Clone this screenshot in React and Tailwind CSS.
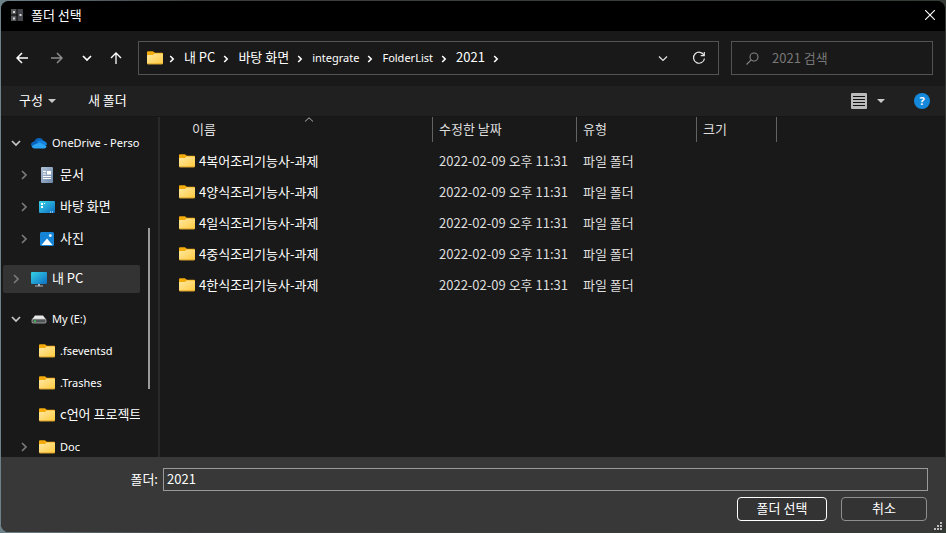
import React from "react";

const KO = "font-['Noto_Sans_CJK_KR',sans-serif] text-[13px] leading-4";
const EN = "font-['Noto_Sans','Noto_Sans_CJK_KR',sans-serif] text-[11px] leading-4";

function FolderIcon() {
  return (
    <svg className="h-4 w-4 shrink-0" viewBox="0 0 16 16" aria-hidden="true">
      <defs>
        <linearGradient id="folder" x1="0" y1="0" x2="1" y2="1">
          <stop offset="0" stopColor="#ffe9a3" />
          <stop offset="1" stopColor="#ffca3f" />
        </linearGradient>
      </defs>
      <path d="M0 2.2Q0 1.2 1 1.2H5.6Q6.2 1.2 6.7 1.7L7.8 2.8H15Q16 2.8 16 3.8V8H0Z" fill="#f4ab0c" />
      <path d="M0 5.6Q0 4.9.8 4.9H6L7.6 3.5H15.2Q16 3.5 16 4.3V13.2Q16 14.2 15 14.2H1Q0 14.2 0 13.2Z" fill="url(#folder)" />
      <path d="M0 13Q0 14.2 1 14.2H15Q16 14.2 16 13L15.5 13.4H.5Z" fill="#dc9c1c" />
    </svg>
  );
}

function CloudIcon() {
  return (
    <svg className="h-4 w-4 shrink-0" viewBox="0 0 16 16" aria-hidden="true">
      <path d="M3.6 6.2A4.8 4.8 0 0 1 12.6 6L8 10.5 1 12Q-.4 10 .3 8.300Q1.300 6.500 3.600 6.200Z" fill="#0a64bd" />
      <path d="M6 6.600Q9 4.600 12.700 6.100Q15.800 6.800 16 9.500L14 11H9Z" fill="#1583dc" />
      <path d="M.8 11.800Q1 10.500 3 9.700L8.500 7.600L15.700 11.200Q15 13.500 13 13.500H3.500Q1.500 13.500.8 11.800Z" fill="#2ba5f3" />
    </svg>
  );
}

function DocumentIcon() {
  return (
    <svg className="h-4 w-4 shrink-0" viewBox="0 0 16 16" aria-hidden="true">
      <defs>
        <linearGradient id="doc" x1="0" y1="0" x2="1" y2="1">
          <stop offset="0" stopColor="#b3c3d8" />
          <stop offset="1" stopColor="#6c87a8" />
        </linearGradient>
      </defs>
      <rect x="2" y="0" width="12" height="16" rx="1" fill="url(#doc)" />
      <path d="M4 4.500H7M4 7H7M4 9.500H12M4 11.500H12" stroke="#fff" />
      <rect x="8" y="4" width="4" height="3.600" fill="#fff" />
    </svg>
  );
}

function DesktopIcon() {
  return (
    <svg className="h-4 w-4 shrink-0" viewBox="0 0 16 16" aria-hidden="true">
      <defs>
        <linearGradient id="screen" x1="0" y1="0" x2="1" y2="1">
          <stop offset="0" stopColor="#3bd4e8" />
          <stop offset="1" stopColor="#0b6fc4" />
        </linearGradient>
      </defs>
      <rect x="0" y="2" width="16" height="12" rx="1" fill="url(#screen)" />
      <path d="M2 4H4V6H2ZM2 7H4V9H2ZM5 4H6V5H5ZM11 12.500H12V13.500H11ZM13 12.500H14V13.500H13Z" fill="#fff" />
    </svg>
  );
}

function PictureIcon() {
  return (
    <svg className="h-4 w-4 shrink-0" viewBox="0 0 16 16" aria-hidden="true">
      <rect x="1" y="1" width="14" height="14" rx="1.500" fill="#1583d6" />
      <path d="M2.500 14L8 7.500L13.500 14Z" fill="#fff" />
      <circle cx="11.300" cy="4.500" r="1.500" fill="#d9f0ff" />
    </svg>
  );
}

function ComputerIcon() {
  return (
    <svg className="h-4 w-4 shrink-0" viewBox="0 0 16 16" aria-hidden="true">
      <defs>
        <linearGradient id="monitor" x1="0" y1="0" x2="1" y2="1">
          <stop offset="0" stopColor="#36d2e6" />
          <stop offset="1" stopColor="#0c6ec2" />
        </linearGradient>
      </defs>
      <rect x="0" y="1" width="16" height="12" rx="1" fill="url(#monitor)" />
      <path d="M7 13H9V14.500H12V15.500H4V14.500H7Z" fill="#a9b5bf" />
    </svg>
  );
}

function DriveIcon() {
  return (
    <svg className="h-4 w-4 shrink-0" viewBox="0 0 16 16" aria-hidden="true">
      <path d="M4 4.500H12L15 8.500H1Z" fill="#e8e8e8" />
      <rect x="1" y="8" width="14" height="4" rx="1" fill="#4f5456" stroke="#c4c4c4" strokeWidth=".7" />
      <rect x="3" y="9.500" width="2" height="1.200" fill="#35e04c" />
    </svg>
  );
}

function Chevron({ open, className }) {
  return (
    <svg className={className} width="10" height="10" viewBox="0 0 10 10" fill="none" stroke="currentColor" strokeWidth="1.700" aria-hidden="true">
      <path d={open ? "M1 3L5 7L9 3" : "M3 1L7 5L3 9"} />
    </svg>
  );
}

function Triangle() {
  return (
    <svg width="8" height="4" viewBox="0 0 8 4" fill="#c8c8c8" aria-hidden="true">
      <path d="M0 0H8L4 4Z" />
    </svg>
  );
}

const tree = [
  { label: "OneDrive - Personal", icon: CloudIcon, state: "open" },
  { label: "문서", icon: DocumentIcon, state: "closed", child: true, ko: true },
  { label: "바탕 화면", icon: DesktopIcon, state: "closed", child: true, ko: true },
  { label: "사진", icon: PictureIcon, state: "closed", child: true, ko: true },
  { label: "내 PC", icon: ComputerIcon, state: "closed", selected: true, ko: true },
  { label: "My (E:)", icon: DriveIcon, state: "open" },
  { label: ".fseventsd", icon: FolderIcon, child: true },
  { label: ".Trashes", icon: FolderIcon, child: true },
  { label: "c언어 프로젝트", icon: FolderIcon, child: true, ko: true },
  { label: "Doc", icon: FolderIcon, state: "closed", child: true },
];

function TreeRow({ item }) {
  const Icon = item.icon;
  return (
    <li className={item.selected ? "py-2.5" : ""}>
      <button
        type="button"
        className={`flex w-full items-center text-left whitespace-nowrap text-white ${item.child ? "pl-4" : "pl-2"} ${item.selected ? "h-7 rounded-xs bg-[#333333]" : "h-8"}`}
      >
        <span className="flex w-5 shrink-0">
          {item.state && <Chevron open={item.state === "open"} className={item.state === "open" ? "text-[#c8c8c8]" : "text-[#7a7a7a]"} />}
        </span>
        <Icon />
        <span className={`pl-[5px] ${item.ko ? `pb-0.5 ${KO}` : EN}`}>{item.label}</span>
      </button>
    </li>
  );
}

const crumbs = [
  { label: "내 PC", ko: true },
  { label: "바탕 화면", ko: true },
  { label: "integrate" },
  { label: "FolderList" },
  { label: "2021", ko: true },
];

function CrumbArrow() {
  return (
    <svg className="mt-0.5 shrink-0" width="6" height="8" viewBox="0 0 6 8" fill="none" stroke="#fff" strokeWidth="1.600" aria-hidden="true">
      <path d="M1.200 1L4.200 4L1.200 7" />
    </svg>
  );
}

function AddressBar() {
  return (
    <div className="flex h-[34px] min-w-0 flex-1 items-center border border-[#535353] pr-3 pl-2">
      <FolderIcon />
      <div className="flex h-full min-w-0 flex-1 items-center overflow-hidden pl-1.5 whitespace-nowrap text-white">
        <CrumbArrow />
        {crumbs.map((c) => (
          <React.Fragment key={c.label}>
            <button type="button" className={`pr-2 pl-[9px] ${c.ko ? `pb-0.5 ${KO}` : EN}`}>{c.label}</button>
            <CrumbArrow />
          </React.Fragment>
        ))}
      </div>
      <button type="button" aria-label="이전 위치" className="mr-6">
        <svg width="10" height="10" viewBox="0 0 10 10" fill="none" stroke="#e6e6e6" strokeWidth="1.200"><path d="M1 3.500L5 7.500L9 3.500" /></svg>
      </button>
      <button type="button" aria-label="새로 고침">
        <svg width="14" height="14" viewBox="0 0 14 14" fill="none" stroke="#e6e6e6" strokeWidth="1.200">
          <path d="M12 4.300A5.500 5.500 0 1 0 12.500 7.500" />
          <path d="M12.300 1V4.600H8.700" />
        </svg>
      </button>
    </div>
  );
}

const files = [
  "4복어조리기능사-과제",
  "4양식조리기능사-과제",
  "4일식조리기능사-과제",
  "4중식조리기능사-과제",
  "4한식조리기능사-과제",
];

const TH = "border-r border-[#636363] p-0 pb-0.5 pl-1.5 text-left font-normal";

function FileTable() {
  return (
    <table className={`w-[616px] table-fixed border-separate border-spacing-0 whitespace-nowrap text-[#dedede] ${KO}`}>
      <colgroup>
        <col className="w-[272px]" />
        <col className="w-[144px]" />
        <col className="w-[120px]" />
        <col className="w-20" />
      </colgroup>
      <thead>
        <tr className="h-[25px]">
          <th scope="col" aria-sort="ascending" className="relative border-r border-[#636363] p-0 pb-0.5 pl-[31px] text-left font-normal">
            이름
            <svg className="absolute top-0 left-[143px]" width="10" height="5" viewBox="0 0 10 5" fill="none" stroke="#b0b0b0" aria-hidden="true"><path d="M1 4.500L5 .8L9 4.500" /></svg>
          </th>
          <th scope="col" className={TH}>수정한 날짜</th>
          <th scope="col" className={TH}>유형</th>
          <th scope="col" className={TH}>크기</th>
        </tr>
      </thead>
      <tbody>
        <tr className="h-[3px]" aria-hidden="true"><td colSpan={4} className="p-0" /></tr>
        {files.map((name) => (
          <tr key={name} className="h-[31px]">
            <td className="p-0 pl-[18px]">
              <span className="flex items-center gap-1 text-white"><FolderIcon />{name}</span>
            </td>
            <td className="p-0 pl-1.5">2022-02-09 오후 11:31</td>
            <td className="p-0 pl-1.5">파일 폴더</td>
            <td className="p-0" />
          </tr>
        ))}
      </tbody>
    </table>
  );
}

export default function App() {
  return (
    <div className="h-screen bg-linear-to-r from-[#6d8289] from-0% via-[#3c3f3f] via-20% to-[#343a34] p-px">
      <main className={`relative flex h-full flex-col overflow-hidden rounded-lg bg-[#191919] text-white ${KO}`}>
        <header className="flex h-[30px] shrink-0 items-center bg-black pr-2.5 pb-0.5 pl-2.5">
          <svg width="12" height="12" viewBox="0 0 12 12" aria-hidden="true">
            <path d="M0 0H5.500V5.500H0ZM0 6.500H5.500V12H0Z" fill="#55565a" />
            <path d="M6.500 0H12V12H6.500Z" fill="#45464c" />
            <path d="M2 2H4V4H2ZM2 8.500H4V10.500H2ZM8.500 5H10.500V7H8.500Z" fill="#d5d5d8" />
          </svg>
          <h1 className="flex-1 pl-2">폴더 선택</h1>
          <button type="button" aria-label="닫기">
            <svg width="10" height="10" viewBox="0 0 10 10" stroke="#fff" strokeWidth="1.100"><path d="M0 0L10 10M10 0L0 10" /></svg>
          </button>
        </header>

        <div className="flex h-[55px] shrink-0 items-start pt-2.5 pr-3">
          <nav className="flex h-[34px] w-[137px] shrink-0 items-center pl-[15px] text-white">
            <button type="button" aria-label="뒤로">
              <svg width="12" height="12" viewBox="0 0 12 12" fill="none" stroke="currentColor" strokeWidth="1.500"><path d="M12 6H1M6 1L1 6L6 11" /></svg>
            </button>
            <button type="button" aria-label="앞으로" className="ml-[23px] text-[#8d8d8d]">
              <svg width="12" height="12" viewBox="0 0 12 12" fill="none" stroke="currentColor" strokeWidth="1.500"><path d="M0 6H11M6 1L11 6L6 11" /></svg>
            </button>
            <button type="button" aria-label="최근 위치" className="ml-[19px]">
              <svg width="10" height="10" viewBox="0 0 10 10" fill="none" stroke="currentColor" strokeWidth="1.700"><path d="M1 3L5 7L9 3" /></svg>
            </button>
            <button type="button" aria-label="위로" className="ml-[18px]">
              <svg width="12" height="12" viewBox="0 0 12 12" fill="none" stroke="currentColor" strokeWidth="1.300"><path d="M6 12V1M1 6L6 1L11 6" /></svg>
            </button>
          </nav>
          <AddressBar />
          <label className="ml-3 flex h-[34px] w-[202px] shrink-0 items-center gap-[13px] border border-[#535353] pl-3.5">
            <svg className="shrink-0" width="13" height="13" viewBox="0 0 13 13" fill="none" stroke="#858585" strokeWidth="1.100" aria-hidden="true">
              <circle cx="8" cy="5" r="4" /><path d="M5.200 7.800L.5 12.500" />
            </svg>
            <input type="search" aria-label="2021 검색" placeholder="2021 검색" className="h-6 w-full min-w-0 bg-transparent pb-0.5 outline-none placeholder:text-[#777777]" />
          </label>
        </div>

        <div className="flex h-[30px] shrink-0 items-center bg-[#202020] pr-[15px] pl-[18px]">
          <button type="button" className="flex items-center gap-[5px]"><span className="pb-0.5">구성</span><Triangle /></button>
          <button type="button" className="ml-8 pb-0.5">새 폴더</button>
          <button type="button" aria-label="보기 변경" className="ml-auto flex items-center gap-2.5">
            <svg width="16" height="16" viewBox="0 0 16 16"><rect width="16" height="16" rx="1" fill="#bababa" /><path d="M2 3.500H14M2 6.500H14M2 9.500H14M2 12.500H14" stroke="#111" /></svg>
            <Triangle />
          </button>
          <button type="button" aria-label="도움말" className="ml-[29px] flex h-4 w-4 items-center justify-center rounded-full bg-[#1489dc] font-['Noto_Sans',sans-serif] text-[11px] leading-4 font-bold">?</button>
        </div>

        <div className="flex min-h-0 flex-1 overflow-hidden border-t border-[#161616]">
          <aside className="w-[139px] shrink-0 overflow-hidden pt-2.5 pl-0.5">
            <ul>{tree.map((item) => <TreeRow key={item.label} item={item} />)}</ul>
          </aside>
          <div className="flex w-[18px] shrink-0 justify-center pt-[111px]">
            <div className="h-[161px] w-0.5 bg-[#9a9a9a]" />
          </div>
          <div className="w-0.5 shrink-0 bg-[#292929]" />
          <section className="min-w-0 flex-1 overflow-hidden pl-px"><FileTable /></section>
        </div>

        <footer className="shrink-0 bg-[#383838] pt-[11px] pr-[17px] pb-[11px]">
          <div className="flex items-center gap-[5px]">
            <label htmlFor="folder-name" className="w-[157px] shrink-0 pb-0.5 text-right">폴더:</label>
            <input id="folder-name" type="text" defaultValue="2021" className="h-[23px] min-w-0 flex-1 border border-[#9a9a9a] bg-[#383838] px-[3px] pb-0.5 outline-none" />
          </div>
          <div className="mt-1.5 flex justify-end gap-3.5 pr-px">
            <button type="button" className="h-6 w-[90px] rounded-sm border border-white bg-[#333333] pb-0.5">폴더 선택</button>
            <button type="button" className="h-6 w-[86px] rounded-sm border border-[#8f8f8f] bg-[#333333] pb-0.5">취소</button>
          </div>
        </footer>
        <svg className="absolute right-[3px] bottom-0.5" width="8" height="8" viewBox="0 0 8 8" fill="#bdbdbd" aria-hidden="true">
          <path d="M6 0H8V2H6ZM3 3H5V5H3ZM6 3H8V5H6ZM0 6H2V8H0ZM3 6H5V8H3ZM6 6H8V8H6Z" />
        </svg>
      </main>
    </div>
  );
}
